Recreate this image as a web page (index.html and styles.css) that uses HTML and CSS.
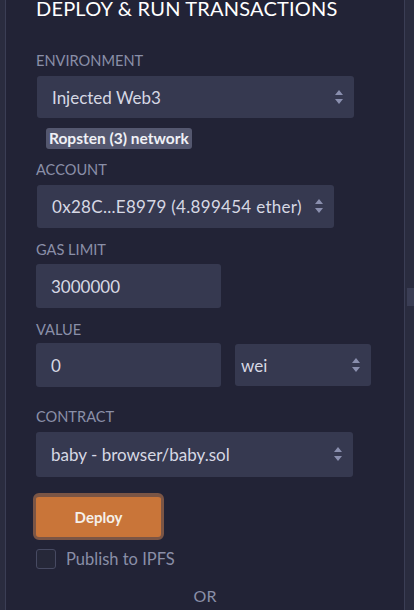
FILE: index.html
```html
<!DOCTYPE html>
<html>
<head>
<meta charset="utf-8">
<link rel="stylesheet" href="styles.css">
</head>
<body>
<div class="app">
  <div class="side-left"></div>
  <main class="panel">
    <h1 class="title">DEPLOY &amp; RUN TRANSACTIONS</h1>

    <section class="group g-env">
      <label class="label">ENVIRONMENT</label>
      <div class="select w-env">
        <span class="select-text">Injected Web3</span>
        <svg class="arrows" width="8" height="15" viewBox="0 0 8 15"><path d="M4 0 L8 5 L0 5 Z M0 9 L8 9 L4 14 Z" fill="#8a8fae"/></svg>
      </div>
      <span class="badge">Ropsten (3) network</span>
    </section>

    <section class="group g-acc">
      <label class="label">ACCOUNT</label>
      <div class="select w-acc">
        <span class="select-text clip">0x28C...E8979 (4.899454 ether)</span>
        <svg class="arrows" width="8" height="15" viewBox="0 0 8 15"><path d="M4 0 L8 5 L0 5 Z M0 9 L8 9 L4 14 Z" fill="#8a8fae"/></svg>
      </div>
    </section>

    <section class="group g-gas">
      <label class="label">GAS LIMIT</label>
      <div class="input w-gas">3000000</div>
    </section>

    <section class="group g-val">
      <label class="label">VALUE</label>
      <div class="row">
        <div class="input w-gas">0</div>
        <div class="select unit">
          <span class="select-text">wei</span>
          <svg class="arrows" width="8" height="15" viewBox="0 0 8 15"><path d="M4 0 L8 5 L0 5 Z M0 9 L8 9 L4 14 Z" fill="#8a8fae"/></svg>
        </div>
      </div>
    </section>

    <section class="group g-con">
      <label class="label">CONTRACT</label>
      <div class="select w-con">
        <span class="select-text">baby - browser/baby.sol</span>
        <svg class="arrows" width="8" height="15" viewBox="0 0 8 15"><path d="M4 0 L8 5 L0 5 Z M0 9 L8 9 L4 14 Z" fill="#8a8fae"/></svg>
      </div>
    </section>

    <button class="deploy">Deploy</button>

    <div class="check-row">
      <span class="checkbox"></span>
      <span class="check-label">Publish to IPFS</span>
    </div>

    <div class="or">OR</div>
  </main>
  <div class="side-right"><div class="thumb"></div></div>
</div>
</body>
</html>
```

FILE: styles.css
```css
* { box-sizing: border-box; }
html, body { margin: 0; padding: 0; height: 100%; overflow: hidden; }
body {
  background: #222336;
  font-family: Lato, "Noto Sans", sans-serif;
  color: #d6d8e4;
}
.app { display: flex; height: 610px; }
.side-left {
  width: 6px;
  background: #2a2c3f;
  border-right: 1px solid #3b3e55;
}
.side-right {
  width: 10px;
  background: #2a2c3f;
  border-left: 1px solid #3b3e55;
  position: relative;
}
.thumb {
  position: absolute;
  left: 2px; right: 0;
  top: 288px; height: 18px;
  background: #3a3d54;
}
.panel {
  flex: 1;
  padding-left: 30px;
  display: flex;
  flex-direction: column;
  align-items: flex-start;
}
.title {
  margin: -4px 0 0 0;
  font-size: 20px;
  line-height: 24px;
  font-weight: 400;
  color: #ffffff;
  letter-spacing: 0.2px;
}
.group { display: flex; flex-direction: column; align-items: flex-start; }
.label {
  font-size: 14.6px;
  line-height: 20px;
  color: #8a8fa8;
  margin-bottom: 5px;
}
.g-env { margin-top: 31px; }
.g-acc { margin-top: 11px; }
.g-gas { margin-top: 12px; }
.g-gas .label { margin-bottom: 4px; }
.g-val { margin-top: 12px; }
.g-val .label { margin-bottom: 3px; }
.g-con { margin-top: 20px; }

.select, .input {
  background: #363950;
  border-radius: 3px;
  font-size: 17px;
  color: #d6d8e4;
  display: flex;
  align-items: center;
}
.select { padding: 0 11px 0 15px; }
.select-text { flex: 1; white-space: nowrap; overflow: hidden; }
.arrows { flex: none; margin-left: 8px; }
.w-env { width: 317px; height: 42px; margin-left: 1px; }
.w-acc { width: 297px; height: 43px; margin-left: 1px; }
.w-acc .select-text { margin-right: 4px; letter-spacing: 0.3px; }
.w-con { width: 317px; height: 45px; }
.input { width: 185px; height: 44px; padding-left: 15px; }
.row { display: flex; align-items: center; gap: 14px; }
.unit { width: 136px; height: 42px; padding-left: 6px; }
.badge {
  margin: 10px 0 0 10px;
  background: #54576f;
  color: #f0f1f6;
  font-weight: 700;
  font-size: 15.5px;
  line-height: 21px;
  padding: 0 3px;
  border-radius: 3px;
}
.deploy {
  margin-top: 16px;
  margin-left: -3px;
  width: 131px;
  height: 47px;
  background: #c97539;
  border: 3px solid #7b5545;
  border-top-width: 4px;
  border-bottom-width: 3px;
  border-radius: 6px;
  color: #f5f0ea;
  font-family: Lato, "Noto Sans", sans-serif;
  font-weight: 700;
  font-size: 15px;
  padding: 0;
}
.check-row { display: flex; align-items: center; margin-top: 9px; gap: 10px; }
.checkbox {
  width: 20px; height: 20px;
  border: 1px solid #474a62;
  background: #262839;
  border-radius: 3px;
}
.check-label { font-size: 16.5px; color: #8a8fa8; }
.or {
  align-self: stretch;
  margin-left: -30px;
  text-align: center;
  margin-top: 17px;
  font-size: 16px;
  color: #8a8fa8;
}
```
